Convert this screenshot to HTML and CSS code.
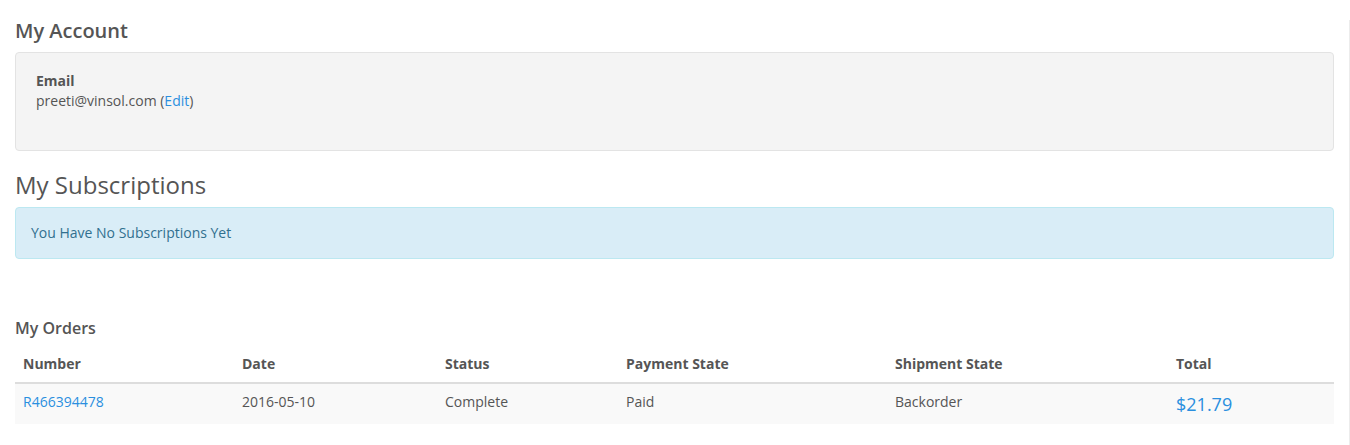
FILE: index.html
```html
<!DOCTYPE html>
<html lang="en">
<head>
    <meta charset="UTF-8">
    <meta name="viewport" content="width=device-width, initial-scale=1.0">
    <title>My Account</title>
    <link rel="stylesheet" href="styles.css">
</head>
<body>
    <div class="page">
        <h1 class="account-title">My Account</h1>

        <div class="well">
            <dl class="account-info">
                <dt>Email</dt>
                <dd>preeti@vinsol.com (<a href="#">Edit</a>)</dd>
            </dl>
        </div>

        <h2 class="section-title">My Subscriptions</h2>
        <div class="alert-info">You Have No Subscriptions Yet</div>

        <h3 class="orders-title">My Orders</h3>
        <table class="order-summary">
            <thead>
                <tr>
                    <th class="col-number">Number</th>
                    <th class="col-date">Date</th>
                    <th class="col-status">Status</th>
                    <th class="col-payment">Payment State</th>
                    <th class="col-shipment">Shipment State</th>
                    <th class="col-total">Total</th>
                </tr>
            </thead>
            <tbody>
                <tr>
                    <td><a href="#">R466394478</a></td>
                    <td>2016-05-10</td>
                    <td>Complete</td>
                    <td>Paid</td>
                    <td>Backorder</td>
                    <td class="order-total">$21.79</td>
                </tr>
            </tbody>
        </table>
    </div>
</body>
</html>
```

FILE: styles.css
```css
* {
    margin: 0;
    padding: 0;
    box-sizing: border-box;
}

body {
    font-family: 'Open Sans', 'Liberation Sans', sans-serif;
    font-size: 14px;
    line-height: 20px;
    color: #555;
    background: #fff;
}

a {
    color: #2a8fdf;
    text-decoration: none;
}

.page {
    width: 1350px;
    min-height: 100vh;
    padding: 0 15px;
    border-right: 1px solid #ececec;
}

.account-title {
    font-size: 20px;
    line-height: 22px;
    font-weight: 600;
    margin-top: 20px;
    margin-bottom: 10px;
}

.well {
    background: #f4f4f4;
    border: 1px solid #e3e3e3;
    border-radius: 4px;
    padding: 18px 19px 19px 20px;
}

.account-info {
    margin-bottom: 20px;
}

.account-info dt {
    font-weight: 700;
}

.section-title {
    font-size: 24px;
    line-height: 26px;
    font-weight: 400;
    margin-top: 21px;
    margin-bottom: 9px;
}

.alert-info {
    background: #d9edf7;
    border: 1px solid #bce8f1;
    border-radius: 4px;
    color: #31708f;
    padding: 15px;
}

.orders-title {
    font-size: 16px;
    line-height: 18px;
    font-weight: 600;
    margin-top: 60px;
    margin-bottom: 9px;
}

.order-summary {
    width: 100%;
    border-collapse: collapse;
    table-layout: fixed;
}

.order-summary th,
.order-summary td {
    text-align: left;
    padding: 8px;
    vertical-align: top;
}

.order-summary th {
    font-weight: 700;
    border-bottom: 2px solid #ddd;
}

.order-summary tbody tr {
    background: #f9f9f9;
}

.col-number { width: 219px; }
.col-date { width: 203px; }
.col-status { width: 181px; }
.col-payment { width: 269px; }
.col-shipment { width: 281px; }
.col-total { width: 166px; }

.order-total {
    font-size: 18px;
    line-height: 24px;
    color: #2a8fdf;
}
```
